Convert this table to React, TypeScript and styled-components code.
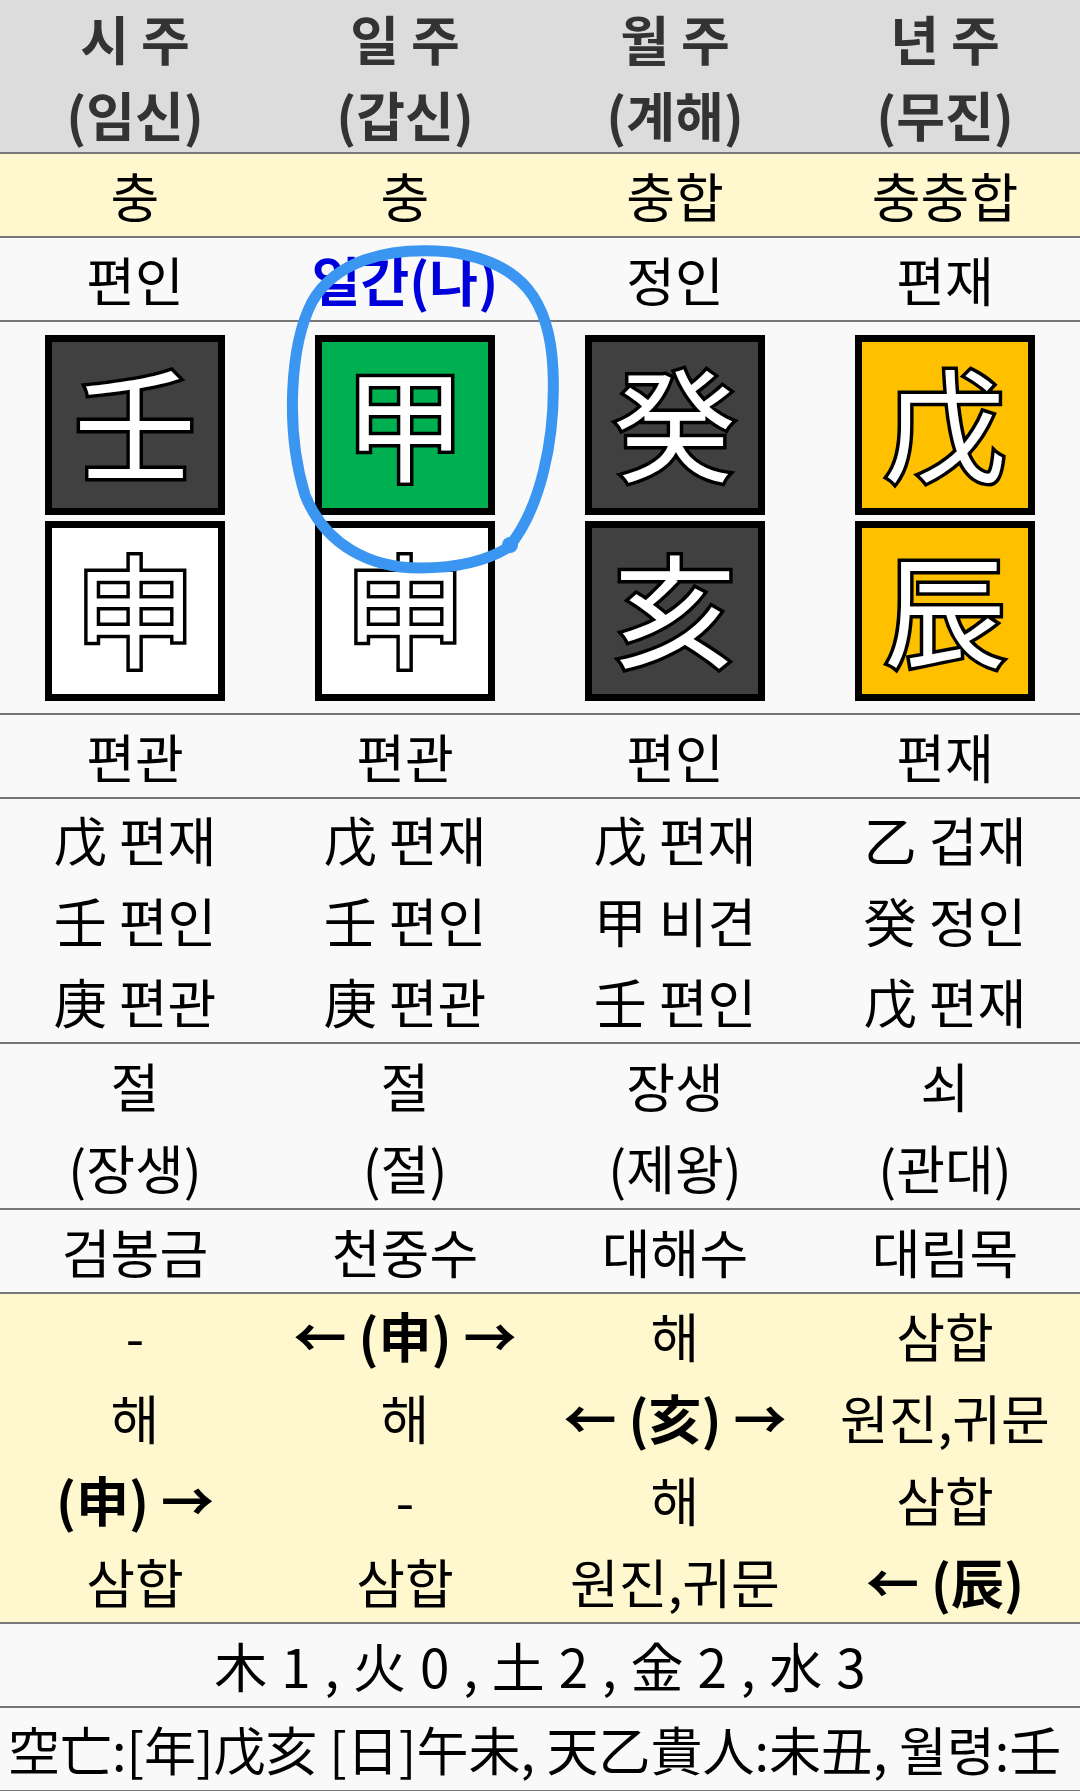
import React from 'react';
import styled, { createGlobalStyle } from 'styled-components';

const GlobalStyle = createGlobalStyle`
  html, body { margin: 0; padding: 0; background: #f9f9f9; }
  body { font-family: "Noto Sans CJK KR", Roboto, sans-serif; color: #000; }
`;

const Page = styled.div`
  position: relative;
  width: 1080px;
  height: 1791px;
  overflow: hidden;
  background: #f9f9f9;
`;

const Sheet = styled.div`
  display: flex;
  flex-direction: column;
`;

const Row = styled.div<{ $bg?: string }>`
  display: grid;
  grid-template-columns: repeat(4, 1fr);
  background: ${(p) => p.$bg ?? '#f9f9f9'};
  border-bottom: 2px solid #777;
`;

const BoxRow = styled(Row)`
  padding: 13px 0 12px;
`;

const Cell = styled.div<{ $lh?: number }>`
  text-align: center;
  font-size: 53px;
  line-height: ${(p) => p.$lh ?? 82}px;
  white-space: nowrap;
`;

const HeadCell = styled(Cell)`
  font-weight: 700;
  color: #333;
`;

const Line = styled.div<{ $bold?: boolean; $color?: string }>`
  font-weight: ${(p) => (p.$bold ? 700 : 'inherit')};
  color: ${(p) => p.$color ?? 'inherit'};
`;

const PillarCol = styled.div`
  display: flex;
  flex-direction: column;
  align-items: center;
  gap: 6px;
`;

const CharBox = styled.div<{ $bg: string }>`
  box-sizing: border-box;
  width: 180px;
  height: 180px;
  border: 7px solid #000;
  background: ${(p) => p.$bg};
  display: flex;
  align-items: center;
  justify-content: center;
  font-family: "Noto Sans CJK KR", sans-serif;
  font-weight: 400;
  font-size: 122px;
  line-height: 1;
  color: #fff;
  -webkit-text-stroke: 7px #000;
  paint-order: stroke fill;
  padding-bottom: 12px;
`;

const WideRow = styled.div<{ $align?: string; $pad?: number; $size?: number; $ws?: number }>`
  background: #f9f9f9;
  border-bottom: 2px solid #777;
  font-size: ${(p) => p.$size ?? 53}px;
  line-height: 82px;
  white-space: nowrap;
  overflow: hidden;
  word-spacing: ${(p) => p.$ws ?? 0}px;
  text-align: ${(p) => p.$align ?? 'center'};
  padding-left: ${(p) => p.$pad ?? 0}px;
`;

const Overlay = styled.svg`
  position: absolute;
  top: 0;
  left: 0;
  pointer-events: none;
`;

type L = { t: string; b?: boolean; c?: string };

const header: string[][] = [
  ['시 주', '(임신)'],
  ['일 주', '(갑신)'],
  ['월 주', '(계해)'],
  ['년 주', '(무진)'],
];

const hap = ['충', '충', '충합', '충충합'];
const topTen: L[] = [
  { t: '편인' },
  { t: '일간(나)', b: true, c: '#0000dd' },
  { t: '정인' },
  { t: '편재' },
];

const pillars = [
  { gan: '壬', ganBg: '#404040', ji: '申', jiBg: '#ffffff' },
  { gan: '甲', ganBg: '#00b050', ji: '申', jiBg: '#ffffff' },
  { gan: '癸', ganBg: '#404040', ji: '亥', jiBg: '#404040' },
  { gan: '戊', ganBg: '#ffc000', ji: '辰', jiBg: '#ffc000' },
];

const botTen = ['편관', '편관', '편인', '편재'];

const hidden: string[][] = [
  ['戊 편재', '壬 편인', '庚 편관'],
  ['戊 편재', '壬 편인', '庚 편관'],
  ['戊 편재', '甲 비견', '壬 편인'],
  ['乙 겁재', '癸 정인', '戊 편재'],
];

const stages: string[][] = [
  ['절', '(장생)'],
  ['절', '(절)'],
  ['장생', '(제왕)'],
  ['쇠', '(관대)'],
];

const napeum = ['검봉금', '천중수', '대해수', '대림목'];

const relations: L[][] = [
  [{ t: '-' }, { t: '해' }, { t: '(申) →', b: true }, { t: '삼합' }],
  [{ t: '← (申) →', b: true }, { t: '해' }, { t: '-' }, { t: '삼합' }],
  [{ t: '해' }, { t: '← (亥) →', b: true }, { t: '해' }, { t: '원진,귀문' }],
  [{ t: '삼합' }, { t: '원진,귀문' }, { t: '삼합' }, { t: '← (辰)', b: true }],
];

const YELLOW = '#fff8cf';

export default function App() {
  return (
    <Page>
      <GlobalStyle />
      <Sheet>
        <Row $bg="#dcdcdc">
          {header.map((h, i) => (
            <HeadCell key={i} $lh={76}>
              {h.map((t, j) => (
                <Line key={j}>{t}</Line>
              ))}
            </HeadCell>
          ))}
        </Row>
        <Row $bg={YELLOW}>
          {hap.map((t, i) => (
            <Cell key={i}>{t}</Cell>
          ))}
        </Row>
        <Row>
          {topTen.map((l, i) => (
            <Cell key={i}>
              <Line $bold={l.b} $color={l.c}>
                {l.t}
              </Line>
            </Cell>
          ))}
        </Row>
        <BoxRow>
          {pillars.map((p, i) => (
            <PillarCol key={i}>
              <CharBox $bg={p.ganBg}>{p.gan}</CharBox>
              <CharBox $bg={p.jiBg}>{p.ji}</CharBox>
            </PillarCol>
          ))}
        </BoxRow>
        <Row>
          {botTen.map((t, i) => (
            <Cell key={i}>{t}</Cell>
          ))}
        </Row>
        <Row>
          {hidden.map((col, i) => (
            <Cell key={i} $lh={81}>
              {col.map((t, j) => (
                <Line key={j}>{t}</Line>
              ))}
            </Cell>
          ))}
        </Row>
        <Row>
          {stages.map((col, i) => (
            <Cell key={i}>
              {col.map((t, j) => (
                <Line key={j}>{t}</Line>
              ))}
            </Cell>
          ))}
        </Row>
        <Row>
          {napeum.map((t, i) => (
            <Cell key={i}>{t}</Cell>
          ))}
        </Row>
        <Row $bg={YELLOW}>
          {relations.map((col, i) => (
            <Cell key={i}>
              {col.map((l, j) => (
                <Line key={j} $bold={l.b}>
                  {l.t}
                </Line>
              ))}
            </Cell>
          ))}
        </Row>
        <WideRow $ws={2}>木 1 , 火 0 , 土 2 , 金 2 , 水 3</WideRow>
        <WideRow $align="left" $pad={8} $size={52}>
          空亡:[年]戊亥 [日]午未, 天乙貴人:未丑, 월령:壬
        </WideRow>
      </Sheet>
      <Overlay width={1080} height={1791} viewBox="0 0 1080 1791">
        <path
          d="M 508 548 C 540 510, 556 440, 553 370 C 550 300, 522 262, 450 252 C 385 246, 335 262, 312 302 C 290 345, 285 430, 305 495 C 325 545, 370 568, 420 568 C 460 568, 490 560, 512 545"
          fill="none"
          stroke="#3a96f0"
          strokeWidth={11}
          strokeLinecap="round"
          strokeLinejoin="round"
        />
        <circle cx={510} cy={545} r={8} fill="#3a96f0" />
      </Overlay>
    </Page>
  );
}
